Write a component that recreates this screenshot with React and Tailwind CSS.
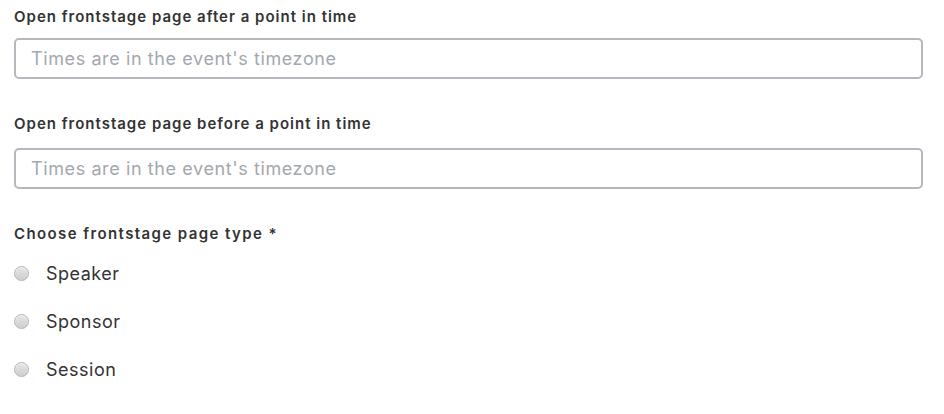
export default function App() {
  const types = ["Speaker", "Sponsor", "Session"];
  return (
    <div className="bg-white w-[944px] h-[414px] px-[14px] pt-[7px] font-['Inter',sans-serif] text-[#333]">
      <div>
        <label className="block text-[15px] font-semibold leading-[20px] tracking-[1px]">
          Open frontstage page after a point in time
        </label>
        <input
          type="text"
          placeholder="Times are in the event's timezone"
          className="mt-[11px] w-[909px] h-[41px] border-2 border-[#b5b8be] rounded-[5px] px-[15px] text-[18px] tracking-[0.6px] placeholder:text-[#a3a8ae] outline-none"
        />
      </div>
      <div className="mt-[35px]">
        <label className="block text-[15px] font-semibold leading-[20px] tracking-[1px]">
          Open frontstage page before a point in time
        </label>
        <input
          type="text"
          placeholder="Times are in the event's timezone"
          className="mt-[14px] w-[909px] h-[41px] border-2 border-[#b5b8be] rounded-[5px] px-[15px] text-[18px] tracking-[0.6px] placeholder:text-[#a3a8ae] outline-none"
        />
      </div>
      <div className="mt-[35px]">
        <label className="block text-[15px] font-semibold leading-[20px] tracking-[1.4px]">
          Choose frontstage page type *
        </label>
        <div className="mt-[5px] flex flex-col">
          {types.map((t) => (
            <label key={t} className="flex items-center h-[48px] gap-[17px]">
              <span className="w-[15px] h-[15px] rounded-full border border-[#b3b3b3] bg-gradient-to-b from-[#e6e6e6] to-[#cfcfcf] shadow-[inset_0_1px_1px_rgba(255,255,255,0.7)]" />
              <span className="text-[18px] tracking-[0.5px] text-[#333]">{t}</span>
            </label>
          ))}
        </div>
      </div>
    </div>
  );
}
